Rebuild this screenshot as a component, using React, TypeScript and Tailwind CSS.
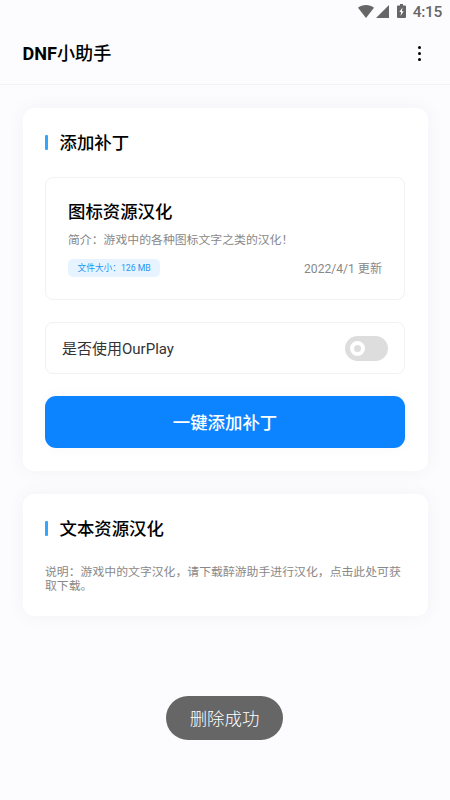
import { useState } from 'react'
import type { ReactNode } from 'react'

function StatusBar() {
  return (
    <div className="flex h-[23px] items-end justify-end pr-[8px] text-[#666]">
      <svg className="mb-[5px] h-[13px] w-[16px]" viewBox="0 0 17 13" preserveAspectRatio="none" fill="currentColor">
        <path d="M8.5 13 0 2.8C2.4 1 5.3 0 8.5 0s6.1 1 8.5 2.8z" />
      </svg>
      <svg className="mb-[5px] ml-[2px] h-[13px] w-[13px]" viewBox="0 0 13 13" fill="currentColor">
        <path d="M0 13 13 0v13z" />
      </svg>
      <svg className="mb-[5px] ml-[8px] h-[14px] w-[9px]" viewBox="0 0 9 14">
        <path
          d="M3 0h3v1.4h2.1c.5 0 .9.4.9.9v10.8c0 .5-.4.9-.9.9H.9c-.5 0-.9-.4-.9-.9V2.3c0-.5.4-.9.9-.9H3z"
          fill="currentColor"
        />
        <path d="M5.5 3.5 2.3 8h1.9L3.5 12l3.2-4.8H4.9z" fill="#fff" />
      </svg>
      <span className="ml-[7px] text-[15.5px] leading-[22px] font-medium tracking-[-0.3px]">4:15</span>
    </div>
  )
}

function Card({ title, children }: { title: string; children: ReactNode }) {
  return (
    <section className="rounded-[11px] bg-white px-[22.5px] shadow-[0_0_18px_rgba(90,90,140,0.06)]">
      <div className="flex h-[69px] items-center gap-[11.5px]">
        <span className="h-[15px] w-[3px] rounded-[1px] bg-[#35a6fb]" />
        <h2 className="mt-px text-[17.4px] leading-6 font-medium text-black">{title}</h2>
      </div>
      {children}
    </section>
  )
}

export default function App() {
  const [useOurPlay, setUseOurPlay] = useState(false)

  return (
    <div className="relative h-[800px] w-[450px] overflow-hidden bg-[#fcfcfe] font-[Roboto,'Noto_Sans_CJK_SC',sans-serif]">
      <StatusBar />
      <header className="flex h-[62px] items-center justify-between border-b border-[#f2f2f4] pr-[29.5px] pl-[22.5px]">
        <h1 className="mt-px text-[18.1px] leading-6 font-bold text-black">
          DNF<span className="font-medium">小助手</span>
        </h1>
        <button aria-label="菜单" className="flex flex-col gap-[2.8px]">
          <span className="size-[3px] rounded-full bg-black" />
          <span className="size-[3px] rounded-full bg-black" />
          <span className="size-[3px] rounded-full bg-black" />
        </button>
      </header>

      <main className="flex flex-col gap-[23px] px-[22.5px] pt-[23px]">
        <Card title="添加补丁">
          <div className="h-[122.5px] rounded-[8px] border border-[#f2f2f2] px-[22px] pt-[21px]">
            <h3 className="text-[17.4px] leading-[26px] font-medium text-black">图标资源汉化</h3>
            <p className="mt-[6px] text-[11.87px] leading-[18px] text-[#888]">简介：游戏中的各种图标文字之类的汉化！</p>
            <div className="mt-[10px] flex h-[18px] items-center justify-between">
              <span className="flex h-[18px] items-center rounded-[5px] bg-[#e7f4ff] px-[9.5px] pt-px text-[8.7px] text-[#2196f3]">
                文件大小：126 MB
              </span>
              <span className="pt-[2px] text-[12.1px] text-[#888]">2022/4/1 更新</span>
            </div>
          </div>

          <div className="mt-[22.5px] flex h-[52px] items-center justify-between rounded-[8px] border border-[#f2f2f2] pr-[16px] pl-[16px]">
            <span className="pt-[2px] text-[15px] text-[#333]">是否使用OurPlay</span>
            <button
              role="switch"
              aria-checked={useOurPlay}
              aria-label="是否使用OurPlay"
              onClick={() => setUseOurPlay(!useOurPlay)}
              className={`flex h-[25px] w-[43px] items-center rounded-full px-[5px] ${useOurPlay ? 'justify-end bg-[#0d84ff]' : 'bg-[#ddd]'}`}
            >
              <span className="size-[15px] rounded-full border-4 border-white" />
            </button>
          </div>

          <button className="mt-[22px] mb-[22.5px] flex h-[52px] w-full items-center justify-center rounded-[11px] bg-[#0d84ff] pt-[2px] text-[17.4px] font-medium text-white shadow-[0_0_14px_rgba(0,0,0,0.03)]">
            一键添加补丁
          </button>
        </Card>

        <Card title="文本资源汉化">
          <p className="-mr-[2px] pt-[2px] pb-[23px] text-[11.87px] leading-[14px] text-[#888]">
            说明：游戏中的文字汉化，请下载醉游助手进行汉化，点击此处可获取下载。
          </p>
        </Card>
      </main>

      {/* toast */}
      <div className="absolute top-[695.5px] left-[166px] flex h-[44.5px] w-[117px] items-center justify-center rounded-full bg-[#666] pt-[2px] text-[17.4px] font-light text-white">
        删除成功
      </div>
    </div>
  )
}
